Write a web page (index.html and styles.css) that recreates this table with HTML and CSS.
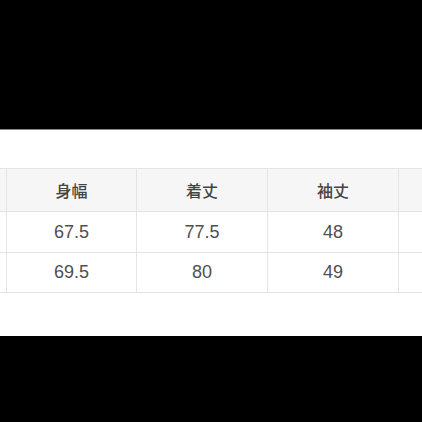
FILE: index.html
```html
<!DOCTYPE html>
<html lang="ja">
<head>
<meta charset="utf-8">
<link rel="stylesheet" href="styles.css">
</head>
<body>
<div class="band-top"></div>
<div class="sheet">
  <div class="table-wrap">
    <table class="size-table">
      <colgroup>
        <col class="c1"><col class="c2"><col class="c3"><col class="c4"><col class="c5">
      </colgroup>
      <thead>
        <tr class="head-row">
          <th></th><th>身幅</th><th>着丈</th><th>袖丈</th><th></th>
        </tr>
      </thead>
      <tbody>
        <tr class="row1">
          <td></td><td>67.5</td><td>77.5</td><td>48</td><td></td>
        </tr>
        <tr class="row2">
          <td></td><td>69.5</td><td>80</td><td>49</td><td></td>
        </tr>
      </tbody>
    </table>
  </div>
</div>
<div class="band-bottom"></div>
</body>
</html>
```
FILE: styles.css
```css
html, body {
  margin: 0;
  padding: 0;
  background: #000;
}
body {
  width: 422px;
  height: 422px;
  overflow: hidden;
  font-family: "Liberation Sans", Arial, "Noto Sans CJK JP", sans-serif;
}
.band-top {
  height: 129px;
  background: #000;
  border-bottom: 1px solid #8a8a8a;
}
.sheet {
  height: 206px;
  background: #fff;
  padding-top: 38px;
  box-sizing: border-box;
}
.table-wrap {
  width: 422px;
  overflow: hidden;
}
.size-table {
  margin-left: -124px;
  border-collapse: collapse;
  table-layout: fixed;
  width: 652px;
}
.c1, .c2 { width: 130px; }
.c3, .c4, .c5 { width: 131px; }
.size-table th,
.size-table td {
  border: 1px solid #e4e4e4;
  text-align: center;
  vertical-align: middle;
  padding: 0;
  color: #4f4f4f;
}
.size-table th {
  background: #f6f6f6;
  font-family: "Noto Sans CJK JP", sans-serif;
  font-weight: 500;
  font-size: 16px;
  color: #444;
  height: 42px;
}
.size-table td {
  font-size: 18px;
  background: #fff;
}
.row1 td { height: 40px; }
.row2 td { height: 39px; }
.band-bottom {
  height: 86px;
  background: #000;
}
```
